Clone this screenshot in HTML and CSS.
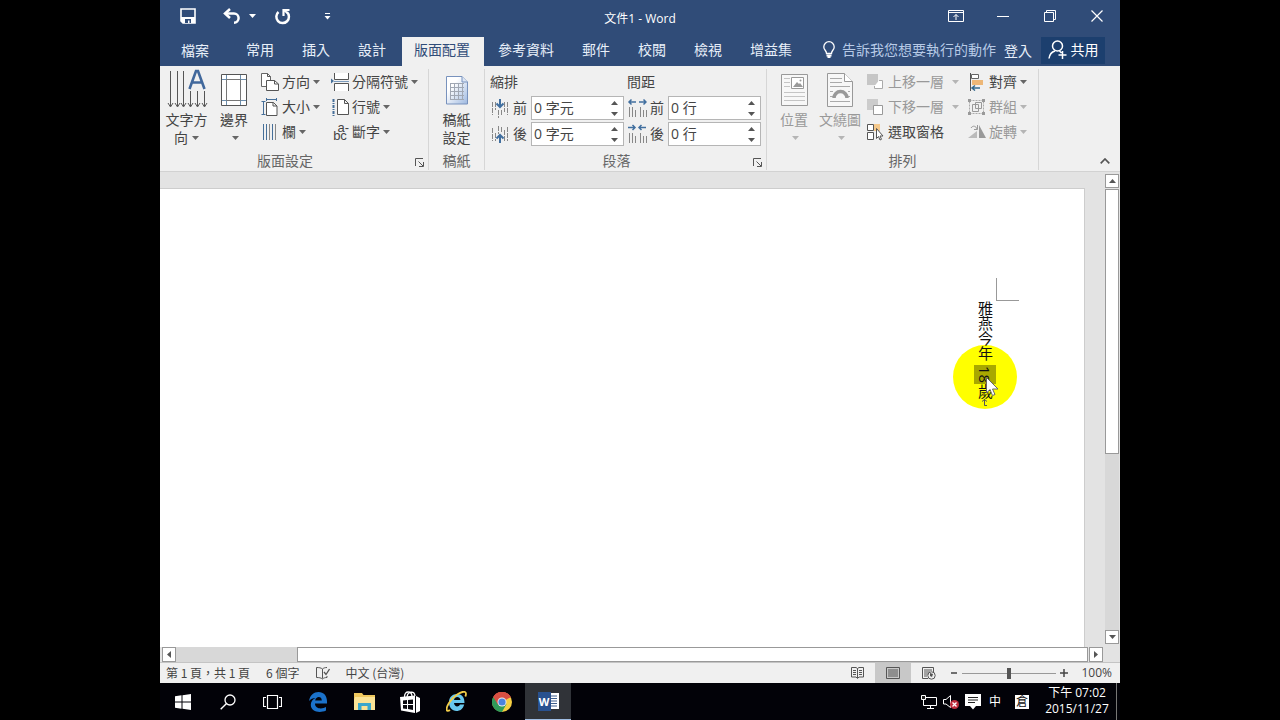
FILE: index.html
```html
<!DOCTYPE html>
<html lang="zh-Hant">
<head>
<meta charset="utf-8">
<title>文件1 - Word</title>
<link rel="stylesheet" href="styles.css">
</head>
<body>
<svg class="defs" aria-hidden="true">
  <symbol id="caret" viewBox="0 0 7 4"><path d="M0 0h7L3.500 4z" fill="currentColor"/></symbol>
  <symbol id="launch" viewBox="0 0 9 9"><path d="M.5 8V.5H8M3.500 3.500l4.500 4.500M8.500 4v4.500H4" fill="none" stroke="#555"/></symbol>
</svg>
<div class="app">
  <header class="titlebar">
    <div class="quick">
      <button class="q-save" aria-label="儲存"><svg width="16" height="16" viewBox="0 0 16 16"><path d="M1 1h14v14H3l-2-2z" fill="none" stroke="#fff" stroke-width="1.600"/><path d="M1 9h14v6H3l-2-2z" fill="#fff"/><path d="M5 11h6v4H9.500v-2.500H8V15H5z" fill="#304c78"/></svg></button>
      <button class="q-undo" aria-label="復原"><svg width="18" height="16" viewBox="0 0 18 16"><path d="M2 5.500h9a4.600 4.600 0 0 1 0 9.200" fill="none" stroke="#fff" stroke-width="2.500"/><path d="M7 1L2 5.500 7 10" fill="none" stroke="#fff" stroke-width="2.500"/></svg></button>
      <button class="q-more" aria-label="復原清單"><svg width="7" height="4"><use href="#caret"/></svg></button>
      <button class="q-redo" aria-label="重複"><svg width="17" height="17" viewBox="0 0 17 17"><path d="M4.500 4a6.300 6.300 0 1 0 8.500.2" fill="none" stroke="#fff" stroke-width="2.500"/><path d="M9.500 8V2h6" fill="none" stroke="#fff" stroke-width="2.200"/><path d="M9.500 2l4 3" stroke="#fff" stroke-width="2"/></svg></button>
      <button class="q-custom" aria-label="自訂快速存取工具列"><svg width="7" height="7" viewBox="0 0 7 7"><path d="M1 .5h5" stroke="#fff"/><path d="M.5 3h6l-3 3.500z" fill="#fff"/></svg></button>
    </div>
    <h1 class="title">文件1 - Word</h1>
    <div class="controls">
      <button aria-label="功能區顯示選項"><svg width="16" height="12" viewBox="0 0 16 12"><path d="M.5.5h15v11H.5zM.5 2.500h15M8 10V4.500M5.500 7L8 4.500 10.500 7" fill="none" stroke="#fff"/></svg></button>
      <button aria-label="最小化"><svg width="12" height="12" viewBox="0 0 12 12"><path d="M0 6.500h12" stroke="#fff"/></svg></button>
      <button aria-label="往下還原"><svg width="12" height="12" viewBox="0 0 12 12"><path d="M.5 2.500h9v9h-9zM2.500 2.500v-2h9v9h-2" fill="none" stroke="#fff"/></svg></button>
      <button aria-label="關閉"><svg width="12" height="12" viewBox="0 0 12 12"><path d="M.5.5l11 11M11.500.5l-11 11" stroke="#fff" stroke-width="1.200"/></svg></button>
    </div>
  </header>

  <nav class="tabs">
    <button class="tab file">檔案</button>
    <button class="tab">常用</button>
    <button class="tab">插入</button>
    <button class="tab">設計</button>
    <button class="tab active">版面配置</button>
    <button class="tab">參考資料</button>
    <button class="tab">郵件</button>
    <button class="tab">校閱</button>
    <button class="tab">檢視</button>
    <button class="tab">增益集</button>
    <button class="tell"><svg width="12" height="18" viewBox="0 0 12 18"><path d="M3.500 12.500c0-3-2.700-3.500-2.700-6.600a5.200 5.200 0 0 1 10.400 0c0 3.100-2.700 3.600-2.700 6.600z" fill="none" stroke="#fff" stroke-width="1.300"/><path d="M3.500 13.500h5v2h-1V17h-3v-1.500h-1z" fill="#fff"/></svg>告訴我您想要執行的動作</button>
    <button class="signin">登入</button>
    <button class="share"><svg width="19" height="20" viewBox="0 0 19 20"><circle cx="9.500" cy="6" r="5" fill="none" stroke="#fff" stroke-width="1.500"/><path d="M1 18.500c.5-4 2.500-6.500 6-7.500M11.500 11l2 2M14.500 11v8M10.500 15h8" fill="none" stroke="#fff" stroke-width="1.500"/></svg>共用</button>
  </nav>

  <section class="ribbon" aria-label="版面配置">
    <div class="group setup">
      <div class="tools">
        <button class="big wide"><svg width="42" height="40" viewBox="0 0 42 40"><path d="M4.500 2v35M11.500 2v35M17.500 2v35M24.500 22v15M31.500 22v15M38.500 22v15" stroke="#555"/><path d="M2 34l2.500 4L7 34M9 34l2.500 4 2.500-4M15 34l2.500 4 2.500-4M22 34l2.500 4 2.500-4M29 34l2.500 4 2.500-4M36 34l2.500 4 2.500-4" fill="none" stroke="#555"/><path d="M23.500 20L30 2h2l6.500 18M26 13.500h10" fill="none" stroke="#41689c" stroke-width="2.600"/></svg><span>文字方<br>向<svg class="caret" width="7" height="4"><use href="#caret"/></svg></span></button>
        <button class="big"><svg width="26" height="40" viewBox="0 0 26 40"><path d="M.5 5.500h25v31H.5z" fill="#fff" stroke="#555"/><path d="M5.500 6v30M19.500 6v30M1 10.500h24M1 31.500h24" stroke="#6c8ead"/><path d="M5.500 10.500h14v21h-14z" fill="none" stroke="#777"/></svg><span>邊界<br><svg class="caret solo" width="7" height="4"><use href="#caret"/></svg></span></button>
        <div class="stack first">
          <button class="small"><svg class="ico" viewBox="0 0 18 18"><path d="M.5.5h6l3 3v10h-9z" fill="#fff" stroke="#666"/><path d="M5.500 7.500h8l4 3.500v6.500h-12z" fill="#fff" stroke="#555"/><path d="M6.500.5v3h3M13.500 7.500V11h4" fill="none" stroke="#555"/></svg>方向<svg class="caret" width="7" height="4"><use href="#caret"/></svg></button>
          <button class="small"><svg class="ico" viewBox="0 0 18 18"><path d="M5.500 4.500h7l3.500 3.500v9.500H5.500zM12 4.500V8h4" fill="#fff" stroke="#555"/><path d="M2.500 3v14M.5 3.500h4M.5 16.500h4M5 1.500h11M5.500 0v3M15.500 0v3" stroke="#466f99"/></svg>大小<svg class="caret" width="7" height="4"><use href="#caret"/></svg></button>
          <button class="small"><svg class="ico" viewBox="0 0 18 18"><path d="M2.500 1v16M5.500 1v16M11.500 1v16" stroke="#466f99"/><path d="M8.500 1v16M14.500 1v16" stroke="#888"/></svg>欄<svg class="caret" width="7" height="4"><use href="#caret"/></svg></button>
        </div>
        <div class="stack">
          <button class="small"><svg class="ico" viewBox="0 0 18 18"><path d="M3.500 0v6.500h14V0M3.500 18v-7.500h14V18" fill="#fff" stroke="#555"/><path d="M3 8.500h15" stroke="#7b9bbd"/><path d="M0 5.500v5L3 8z" fill="#466f99"/></svg>分隔符號<svg class="caret" width="7" height="4"><use href="#caret"/></svg></button>
          <button class="small"><svg class="ico" viewBox="0 0 18 18"><path d="M6.500 1.500h7l4 4v11h-11zM13.500 1.500v4h4" fill="#fff" stroke="#555"/><path d="M2.500 1v17" stroke="#466f99" stroke-width="2" stroke-dasharray="3 1 1 1"/></svg>行號<svg class="caret" width="7" height="4"><use href="#caret"/></svg></button>
          <button class="small"><span class="hyph"><span>a-</span><span>bc</span></span>斷字<svg class="caret" width="7" height="4"><use href="#caret"/></svg></button>
        </div>
      </div>
      <div class="caption"><span>版面設定</span><button class="launcher" aria-label="版面設定對話方塊"><svg width="9" height="9"><use href="#launch"/></svg></button></div>
    </div>

    <div class="group manuscript">
      <div class="tools">
        <button class="big"><svg width="22" height="40" viewBox="0 0 22 40"><defs><linearGradient id="sheet" x2="1" y2="1"><stop offset=".3" stop-color="#fff"/><stop offset="1" stop-color="#9db8e0"/></linearGradient></defs><path d="M.5 7.500H16l5.500 5.500v22H.5z" fill="url(#sheet)" stroke="#7892bd"/><path d="M16 7.500V13h5.500" fill="#dce6f5" stroke="#7892bd"/><path d="M4 14.500h14M4 18.500h14M4 22.500h14M4 26.500h14M4 30.500h14M4.500 14v17M8.500 14v17M12.500 14v17M16.500 14v17" stroke="#a0a7b3"/></svg><span>稿紙<br>設定</span></button>
      </div>
      <div class="caption"><span>稿紙</span></div>
    </div>

    <div class="group paragraph">
      <div class="tools">
        <div class="fields">
          <h2>縮排</h2>
          <div class="field"><svg width="20" height="20" viewBox="0 0 20 20"><path d="M2.500 4v13M5.500 4v8M14.500 4v10M17.500 4v13M8.500 12v8M11.500 12v6" stroke="#888" stroke-dasharray="5 1"/><path d="M10 1v8M6.500 5.500L10 9l3.500-3.500" fill="none" stroke="#416f9f" stroke-width="2"/></svg><label for="ind-before">前</label><div class="spin"><input id="ind-before" value="0 字元"><div class="steps"><button class="up" aria-label="增加"><svg width="7" height="4"><use href="#caret"/></svg></button><button aria-label="減少"><svg width="7" height="4"><use href="#caret"/></svg></button></div></div></div>
          <div class="field"><svg width="20" height="20" viewBox="0 0 20 20"><path d="M2.500 4v13M5.500 9v8M14.500 6v11M17.500 3v14M8.500 2v8M11.500 3v6" stroke="#888" stroke-dasharray="5 1"/><path d="M10 19v-8M6.500 14.500L10 11l3.500 3.500" fill="none" stroke="#416f9f" stroke-width="2"/></svg><label for="ind-after">後</label><div class="spin"><input id="ind-after" value="0 字元"><div class="steps"><button class="up" aria-label="增加"><svg width="7" height="4"><use href="#caret"/></svg></button><button aria-label="減少"><svg width="7" height="4"><use href="#caret"/></svg></button></div></div></div>
        </div>
        <div class="fields">
          <h2>間距</h2>
          <div class="field"><svg width="20" height="20" viewBox="0 0 20 20"><path d="M2.500 9v10M5.500 9v10M8.500 12v7M13.500 9v10M16.500 12v7M19.500 12v7" stroke="#888"/><path d="M9 4H2M4.500 1.500L2 4l2.500 2.500M12 4h7M16.500 1.500L19 4l-2.500 2.500" fill="none" stroke="#416f9f" stroke-width="1.500"/></svg><label for="sp-before">前</label><div class="spin"><input id="sp-before" value="0 行"><div class="steps"><button class="up" aria-label="增加"><svg width="7" height="4"><use href="#caret"/></svg></button><button aria-label="減少"><svg width="7" height="4"><use href="#caret"/></svg></button></div></div></div>
          <div class="field"><svg width="20" height="20" viewBox="0 0 20 20"><path d="M2.500 9v10M5.500 9v10M8.500 12v7M13.500 9v10M16.500 12v7M19.500 12v7" stroke="#888"/><path d="M1 3.500h7M5.500 1L8 3.500 5.500 6M19 3.500h-7M14.500 1L12 3.500 14.500 6" fill="none" stroke="#416f9f" stroke-width="1.500"/></svg><label for="sp-after">後</label><div class="spin"><input id="sp-after" value="0 行"><div class="steps"><button class="up" aria-label="增加"><svg width="7" height="4"><use href="#caret"/></svg></button><button aria-label="減少"><svg width="7" height="4"><use href="#caret"/></svg></button></div></div></div>
        </div>
      </div>
      <div class="caption"><span>段落</span><button class="launcher" aria-label="段落對話方塊"><svg width="9" height="9"><use href="#launch"/></svg></button></div>
    </div>

    <div class="group arrange">
      <div class="tools">
        <button class="big off"><svg width="27" height="40" viewBox="0 0 27 40"><path d="M.5 5.500h26v31H.5z" fill="#f7f7f7" stroke="#999"/><path d="M3 9.500h6M3 13.500h6M3 17.500h6M3 23.500h21M3 27.500h21M3 31.500h21" stroke="#c4c4c4"/><path d="M10.500 8.500h12v11h-12z" fill="#fff" stroke="#999"/><path d="M12 18l4-5 2 2 1-1 3 4z" fill="#999"/><circle cx="19.500" cy="11.500" r="1" fill="#999"/></svg><span>位置<br><svg class="caret solo" width="7" height="4"><use href="#caret"/></svg></span></button>
        <button class="big off"><svg width="26" height="40" viewBox="0 0 26 40"><path d="M.5 4.500h17l8 8v25H.5z" fill="#f7f7f7" stroke="#999"/><path d="M17.500 4.500v8h8" fill="#fff" stroke="#999"/><path d="M3 9.500h12M3 13.500h12M3 17.500h20M3 22.500h3M21 22.500h2M3 27.500h3M21 27.500h2M3 32.500h20" stroke="#aaa"/><path d="M7 29a6.500 6.500 0 0 1 13 0" fill="none" stroke="#999" stroke-width="3.500"/></svg><span>文繞圖<br><svg class="caret solo" width="7" height="4"><use href="#caret"/></svg></span></button>
        <div class="stack layer">
          <button class="small off"><svg class="ico" viewBox="0 0 18 18"><path d="M0 1h11v11H0z" fill="#c6c6c6"/><path d="M12 7.500h3.500v8h-8V13" fill="#fff" stroke="#aaa"/></svg>上移一層<svg class="caret" width="7" height="4"><use href="#caret"/></svg></button>
          <button class="small off"><svg class="ico" viewBox="0 0 18 18"><path d="M0 1h11v11H0z" fill="#ccc"/><path d="M6.500 7.500h9v9h-9z" fill="#fff" stroke="#999"/></svg>下移一層<svg class="caret" width="7" height="4"><use href="#caret"/></svg></button>
          <button class="small"><svg class="ico" viewBox="0 0 18 18"><path d="M7 1h6v7H7z" fill="#f5c98c"/><path d="M.5 1.500h6v6h-6zM.5 9.500h6v7h-6z" fill="#fff" stroke="#555"/><path d="M9.500 5.500v10l2-2 1.500 3.500 1.500-.7-1.500-3.300h3z" fill="#fff" stroke="#555"/></svg>選取窗格</button>
        </div>
        <div class="stack">
          <button class="small"><svg class="ico" viewBox="0 0 18 18"><path d="M2.500 0v18" stroke="#555"/><path d="M3.500 1.500h7v4h-7z" fill="#fff" stroke="#666"/><path d="M4 7h11v5H4z" fill="#edb777"/><path d="M4 15h8M7 12.500L4 15l3 2.500" fill="none" stroke="#33698e" stroke-width="1.500"/></svg>對齊<svg class="caret" width="7" height="4"><use href="#caret"/></svg></button>
          <button class="small off"><svg class="ico" viewBox="0 0 18 18"><path d="M1.500 2.500h14v13h-14z" fill="none" stroke="#aaa" stroke-dasharray="2 1"/><path d="M4.500 6.500h6v7h-6zM7.500 4.500h6v6h-6z" fill="none" stroke="#999"/><path d="M0 1h3v3H0zM14 1h3v3h-3zM0 14h3v3H0zM14 14h3v3h-3z" fill="#999"/></svg>群組<svg class="caret" width="7" height="4"><use href="#caret"/></svg></button>
          <button class="small off"><svg class="ico" viewBox="0 0 18 18"><path d="M11 2v13h7z" fill="#999"/><path d="M0 15h9V8z" fill="#bbb"/><path d="M3 5c2-3 5-2 6 1M9.500 2v4.500H6" fill="none" stroke="#999"/></svg>旋轉<svg class="caret" width="7" height="4"><use href="#caret"/></svg></button>
        </div>
      </div>
      <div class="caption"><span>排列</span></div>
    </div>
    <button class="collapse" aria-label="摺疊功能區"><svg width="10" height="6" viewBox="0 0 10 6"><path d="M.7 5.300L5 1l4.300 4.300" fill="none" stroke="#555" stroke-width="1.700"/></svg></button>
  </section>

  <main class="workspace">
    <div class="canvas">
      <article class="page">
        <div class="text">
          <p>雅燕今年<mark>18</mark>歲<svg width="6" height="8" viewBox="0 0 6 8"><path d="M2.500 0v6.500H5M0 2.500L2.500.5 5 2.500" fill="none" stroke="#555"/></svg></p>
          <svg class="pointer" width="13" height="20" viewBox="0 0 13 20"><path d="M.5.500v15.500l3.500-3.500 2.500 6 2.500-1-2.500-5.500h5.500z" fill="#fff" stroke="#666"/></svg>
        </div>
      </article>
    </div>
    <div class="vscroll">
      <button aria-label="向上捲動" class="up"><svg width="7" height="4"><use href="#caret"/></svg></button>
      <div class="thumb"></div>
      <div class="space"></div>
      <button aria-label="向下捲動"><svg width="7" height="4"><use href="#caret"/></svg></button>
    </div>
    <div class="hscroll">
      <button aria-label="向左捲動"><svg width="4" height="7" viewBox="0 0 4 7"><path d="M4 0v7L0 3.500z" fill="#555"/></svg></button>
      <div class="space"></div>
      <div class="thumb"></div>
      <button aria-label="向右捲動"><svg width="4" height="7" viewBox="0 0 4 7"><path d="M0 0v7l4-3.500z" fill="#555"/></svg></button>
    </div>
  </main>

  <footer class="status">
    <span class="pages">第 1 頁，共 1 頁</span>
    <span>6 個字</span>
    <button class="proof" aria-label="校對"><svg width="14" height="13" viewBox="0 0 14 13"><path d="M6.500 11.500V2C5 .8 3 .5.5.5v10c2.500 0 4.500.3 6 1.500 1-1 2.500-1.500 4.500-1.500V9M6.500 2C7.500 1 9 .5 11 .5" fill="none" stroke="#555"/><path d="M8 5l2 2.500L13.500 2" fill="none" stroke="#555" stroke-width="1.300"/></svg></button>
    <span>中文 (台灣)</span>
    <div class="views">
      <button aria-label="閱讀模式"><svg width="13" height="12" viewBox="0 0 13 12"><path d="M6.500 11V1.500L5 .5H.5v9.500H5l1.500 1.500L8 10h4.500V.5H8L6.500 1.500M2 3.500h3M2 5.500h3M2 7.500h3M8 3.500h3M8 5.500h3M8 7.500h3" fill="none" stroke="#555"/></svg></button>
      <button class="on" aria-label="整頁模式"><svg width="14" height="12" viewBox="0 0 14 12"><path d="M.5.500h13v11H.5zM2 3h10M2 5h10M2 7h10M2 9h10" fill="none" stroke="#555"/></svg></button>
      <button aria-label="Web 版面配置"><svg width="14" height="13" viewBox="0 0 14 13"><path d="M6 11.500H.5V.500h11V5M2 3h8M2 5h6M2 7h4M2 9h3" fill="none" stroke="#555"/><circle cx="9.500" cy="8.500" r="3.700" fill="#eee" stroke="#555"/><path d="M8 6l3 1-1 3-2-1z" fill="#555"/></svg></button>
    </div>
    <div class="zoom">
      <button aria-label="縮小"><svg width="8" height="8" viewBox="0 0 8 8"><path d="M1 4h6" stroke="#444" stroke-width="1.500"/></svg></button>
      <input type="range" min="0" max="100" value="50" aria-label="縮放">
      <button aria-label="放大"><svg width="8" height="8" viewBox="0 0 8 8"><path d="M0 4h8M4 0v8" stroke="#444" stroke-width="1.500"/></svg></button>
      <span class="percent">100%</span>
    </div>
  </footer>

  <div class="taskbar">
    <button class="sys" aria-label="開始"><svg width="16" height="16" viewBox="0 0 16 16"><path d="M0 2.300l6.500-1v6.200H0zM7.500 1.200L16 0v7.500H7.500zM0 8.500h6.500v6.200l-6.500-1zM7.500 8.500H16V16l-8.500-1.200z" fill="#fff"/></svg></button>
    <button class="sys" aria-label="搜尋"><svg width="16" height="16" viewBox="0 0 16 16"><circle cx="10" cy="6" r="5" fill="none" stroke="#fff" stroke-width="1.300"/><path d="M6.500 9.500L.7 15.300" stroke="#fff" stroke-width="1.400"/></svg></button>
    <button class="sys" aria-label="工作檢視"><svg width="19" height="14" viewBox="0 0 19 14"><path d="M4.500.5h10v13h-10zM3 2.500H.5v9H3M16 2.500h2.500v9H16" fill="none" stroke="#fff" stroke-width="1.200"/></svg></button>
    <button aria-label="Edge"><svg width="20" height="20" viewBox="0 0 20 20"><path d="M1 9C2 3 6 0 10.500 0 16 0 19.500 4 19 11.500H7c0 5.500 7 6 11 3.500v3.500C12 21.500 3 20 2.800 13 2.700 9.500 5 7 7.500 6 5 6 2.500 7 1 9zM7.200 8.500h6.600c0-5-6.100-4.500-6.600 0z" fill="#1b72ca"/></svg></button>
    <button aria-label="檔案總管"><svg width="21" height="18" viewBox="0 0 21 18"><path d="M0 0h8l1.500 2H21v15H0z" fill="#eec75d"/><path d="M1 4h20v13H0V7z" fill="#fae395"/><path d="M4 17v-7h13v7h-3.500v-4h-6v4z" fill="#39a7cc"/></svg></button>
    <button aria-label="市集"><svg width="20" height="22" viewBox="0 0 20 22"><path d="M4.500 6C4.500-1 11.500 0 12 5M7 6C8-.5 14.500 0 15 5" fill="none" stroke="#fff" stroke-width="1.300"/><path d="M0 6l15-1.500V22L1 19.500zM16 5l4 2v13l-4 2z" fill="#fff"/><path d="M3 9.500l4-.5v4H3zM8 9l5-.5V13H8zM3 14h4v4l-4-.5zM8 14h5v5l-5-1z" fill="#08080e"/></svg></button>
    <button aria-label="Internet Explorer"><svg width="21" height="21" viewBox="0 0 21 21"><path d="M3 11c0-5 3.500-8 8-8s7.700 3 7.500 9H8c.5 4.500 5 4 6 1.500h4.200C17 18 14 20 10.500 20 6 20 3 16.500 3 11zM8 9h6.500c-.5-4-6-4-6.500 0z" fill="#68c8ee"/><path d="M4 19c-4 3-4.500-1.500-1-7C7 5.500 15.500-.5 19 1c1.500.7 1 3 .3 4.500" fill="none" stroke="#f1cc48" stroke-width="1.800"/></svg></button>
    <button aria-label="Chrome"><svg width="20" height="20" viewBox="0 0 20 20"><circle cx="10" cy="10" r="10" fill="#f6cf43"/><path d="M10 10L1.300 5A10 10 0 0 1 18.700 5z" fill="#d84f43"/><path d="M1.300 5A10 10 0 0 0 10 20l4.500-8L10 10z" fill="#309b59"/><path d="M10 5.500h9l-.3-.5A10 10 0 0 0 1.300 5l4.500 7.500z" fill="#d84f43"/><circle cx="10" cy="10" r="4.500" fill="#eee"/><circle cx="10" cy="10" r="3.600" fill="#4b83df"/></svg></button>
    <button class="current" aria-label="Word"><span class="word"><b>W</b><svg width="8" height="16" viewBox="0 0 8 16"><path d="M0 0h8v16H0z" fill="#fff"/><path d="M0 3h6M0 5.500h6M0 8h6M0 10.500h6M0 13h6" stroke="#405f8c"/></svg></span></button>
    <div class="tray">
      <button aria-label="網路"><svg width="16" height="14" viewBox="0 0 16 14"><path d="M3 2.500h12.500v8H4M9.500 11v2M6 13.500h7M2.500 5v5.500H5" fill="none" stroke="#fff"/><path d="M.5.500h4v4h-4z" fill="#222" stroke="#fff"/></svg></button>
      <button aria-label="音量"><svg width="16" height="14" viewBox="0 0 16 14"><path d="M.5 4.500H3L7.500.5v12L3 9H.5z" fill="none" stroke="#fff"/><circle cx="11.500" cy="9.500" r="4.500" fill="#bd2c3b"/><path d="M9.500 7.500l4 4M13.500 7.500l-4 4" stroke="#fff" stroke-width="1.300"/></svg></button>
      <button aria-label="通知"><svg width="16" height="16" viewBox="0 0 16 16"><path d="M0 0h16v12h-5l-3 3.500L5 12H0z" fill="#fff"/><path d="M3 3.500h10M3 6h10M3 8.500h7" stroke="#222"/></svg></button>
      <button class="lang">中</button>
      <button class="ime"><span>倉</span></button>
    </div>
    <time class="clock">下午 07:02<br>2015/11/27</time>
    <button class="desktop" aria-label="顯示桌面"></button>
  </div>
</div>
</body>
</html>
```
FILE: styles.css
```css
* { box-sizing: border-box; }
body {
  margin: 0;
  background: #000;
  color: #444;
  font: 14px/18px "Open Sans", "Noto Sans CJK TC", sans-serif;
}
button {
  display: flex;
  align-items: center;
  justify-content: center;
  padding: 0;
  border: 0;
  background: none;
  color: inherit;
  font: inherit;
  white-space: nowrap;
}
h1, h2, p { margin: 0; font: inherit; }
svg { flex: none; }
.defs { position: absolute; width: 0; height: 0; }
.app {
  display: flex;
  flex-direction: column;
  width: 75%;
  min-height: 100vh;
  margin: 0 auto;
}

/* title bar */
.titlebar {
  display: grid;
  grid-template-columns: 1fr auto 1fr;
  height: 36px;
  background: #304c78;
  color: #fff;
}
.title { align-self: center; padding-top: 2px; font-size: 12px; }
.quick { display: flex; align-items: center; height: 32px; padding-left: 16px; }
.quick button { height: 24px; }
.q-save { width: 24px; }
.q-undo { width: 24px; margin-left: 20px; }
.q-more { width: 16px; }
.q-redo { width: 24px; margin-left: 10px; }
.q-custom { width: 24px; margin-left: 21px; }
.controls { display: flex; justify-content: flex-end; height: 32px; }
.controls button { width: 47px; }

/* tabs */
.tabs {
  display: flex;
  height: 30px;
  background: #304c78;
  color: #e8f0fa;
}
.tab { padding: 0 14px 3px; border-top: 1px solid #304c78; }
.tab.file { padding: 0 23px 2px 21px; }
.tab.active {
  padding-left: 12px;
  border-left: 2px solid #304c78;
  background: #f0f0f0;
  color: #304c78;
}
.tell { gap: 7px; margin-left: auto; padding-bottom: 2px; color: #b7cae6; }
.signin { margin-left: 8px; }
.share {
  gap: 4px;
  width: 64px;
  height: 27px;
  margin: 1px 15px 0 9px;
  padding-bottom: 2px;
  background: #1c3f6e;
  color: #fff;
}

/* ribbon */
.ribbon {
  display: flex;
  height: 106px;
  padding: 3px 0 1px;
  border-bottom: 1px solid #d2d2d2;
  background: #f0f0f0;
}
.group {
  display: flex;
  flex-direction: column;
  justify-content: space-between;
  flex: none;
  border-right: 1px solid #d6d6d6;
}
.setup { width: 269px; }
.manuscript { width: 56px; }
.paragraph { width: 282px; }
.arrange { width: 272px; }
.tools { display: flex; padding-left: 2px; }
.manuscript .tools { justify-content: center; padding: 0; }
.paragraph .tools { gap: 3px; padding-left: 5px; }
.arrange .tools { padding-left: 4px; }
.caption { display: flex; height: 18px; color: #666; }
.caption span { flex: 1; text-align: center; }
.launcher { width: 18px; padding-top: 2px; }
.big { flex-direction: column; justify-content: flex-start; width: 46px; }
.big.wide { width: 49px; }
.big > svg { display: block; }
.big > span { line-height: 18px; padding-top: 2px; text-align: center; }
.caret { color: #666; }
.big .caret { margin: 0 0 3px 4px; }
.big .caret.solo { margin-left: 2px; }
.stack { display: flex; flex-direction: column; margin-left: 4px; }
.stack.first { width: 66px; }
.stack.layer { width: 97px; }
.small { justify-content: flex-start; gap: 3px; height: 25px; }
.layer .small .caret { margin-left: 5px; }
.ico { width: 18px; height: 18px; }
.off { color: #999; }
.off .caret { color: #b5b5b5; }
.hyph { display: flex; flex-direction: column; width: 18px; font-family: "Liberation Sans", sans-serif; font-size: 13px; color: #444; }
.hyph span { height: 8px; line-height: 8px; }
.hyph span:first-child { align-self: flex-end; }
.fields { display: flex; flex-direction: column; gap: 2px; }
.fields h2 { height: 25px; line-height: 25px; }
.field { display: flex; align-items: center; height: 24px; }
.field label { padding: 0 4px 0 3px; }
.spin {
  display: flex;
  width: 93px;
  height: 24px;
  border: 1px solid #b5b5b5;
  background: #fff;
}
.spin input {
  flex: 1;
  min-width: 0;
  padding: 0 2px;
  border: 0;
  background: none;
  color: #444;
  font: inherit;
}
.steps { display: flex; flex-direction: column; width: 18px; color: #555; }
.steps button { flex: 1; }
.up svg { transform: rotate(180deg); }
.collapse { align-self: flex-end; width: 30px; height: 18px; margin-left: auto; }

/* document */
.workspace {
  display: grid;
  flex: 1;
  grid-template-columns: 1fr 15px;
  grid-template-rows: 1fr 15px;
  background: #e3e3e3;
}
.canvas { display: flex; padding: 16px 20px 0 0; }
.page {
  display: flex;
  flex: 1;
  justify-content: flex-end;
  align-items: flex-start;
  padding: 111px 88px 0 0;
  border: solid #cdcdcd;
  border-width: 1px 1px 0 0;
  background: #fff;
}
.text {
  position: relative;
  z-index: 0;
  color: #111;
  font-size: 15px;
  line-height: 22px;
  writing-mode: vertical-rl;
}
.text::before {
  content: "";
  position: absolute;
  z-index: -1;
  top: 45px;
  left: -21px;
  width: 64px;
  height: 64px;
  border-radius: 50%;
  background: #ff0;
}
.text::after {
  content: "";
  position: absolute;
  top: -22px;
  left: 100%;
  width: 22px;
  height: 22px;
  border: solid #999;
  border-width: 0 0 1px 1px;
}
.text p { padding-top: 1px; }
.text mark {
  display: inline-block;
  margin-top: 4px;
  padding: 1px 0;
  background: #a8a800;
  color: inherit;
}
.pointer { position: absolute; top: 77px; left: 12px; }
.vscroll { display: flex; flex-direction: column; padding: 2px 1px 3px 0; }
.vscroll button { height: 14px; border: 1px solid #999; background: #fff; color: #555; }
.vscroll .thumb { flex: 6; margin-top: 1px; border: 1px solid #999; background: #fff; }
.vscroll .space { flex: 4; background: #d8d8d8; }
.hscroll { display: flex; padding-left: 2px; }
.hscroll button { width: 14px; border: 1px solid #999; background: #fff; }
.hscroll .space { flex: 12; background: #d8d8d8; }
.hscroll .thumb { flex: 78; margin-right: 1px; border: 1px solid #999; background: #fff; }
.hscroll button:last-child { margin-right: 2px; }

/* status bar */
.status {
  display: flex;
  align-items: center;
  height: 21px;
  padding: 0 8px 0 6px;
  border-top: 1px solid #c4c4c4;
  background: #f0f0f0;
  font-size: 12px;
}
.status > span { font-family: "Noto Sans CJK TC", sans-serif; }
.status .pages { margin-right: 16px; }
.proof { margin: 0 15px 0 17px; }
.views { display: flex; align-self: stretch; margin-left: auto; }
.views button { width: 36px; }
.views .on { background: #c8c8c8; }
.zoom { display: flex; align-items: center; margin-left: 3px; }
.zoom input {
  width: 94px;
  height: 12px;
  margin: 0 4px;
  appearance: none;
  background: linear-gradient(#999, #999) center / 100% 1px no-repeat;
}
.zoom input::-webkit-slider-thumb {
  appearance: none;
  width: 4px;
  height: 11px;
  background: #555;
}
.percent { margin-left: 13px; }

/* taskbar */
.taskbar {
  display: flex;
  height: 37px;
  background: #020208;
  color: #fff;
}
.taskbar button { width: 46px; }
.taskbar .sys { width: 45px; }
.taskbar .current { border-bottom: 1px solid #9fbde2; background: #303338; }
.word { display: flex; align-items: center; }
.word b {
  width: 13px;
  background: #29518f;
  font-size: 11px;
  line-height: 19px;
}
.tray { display: flex; margin-left: auto; }
.taskbar .tray button { width: 22px; }
.taskbar .tray .lang { font-size: 12px; }
.taskbar .tray .ime { width: 32px; }
.ime span {
  width: 14px;
  background: #fff;
  color: #111;
  font-size: 12px;
  line-height: 14px;
}
.clock { width: 78px; padding-top: 2px; font-size: 12px; line-height: 16px; text-align: center; }
.taskbar .desktop { width: 4px; border-left: 1px solid #777; }
```
